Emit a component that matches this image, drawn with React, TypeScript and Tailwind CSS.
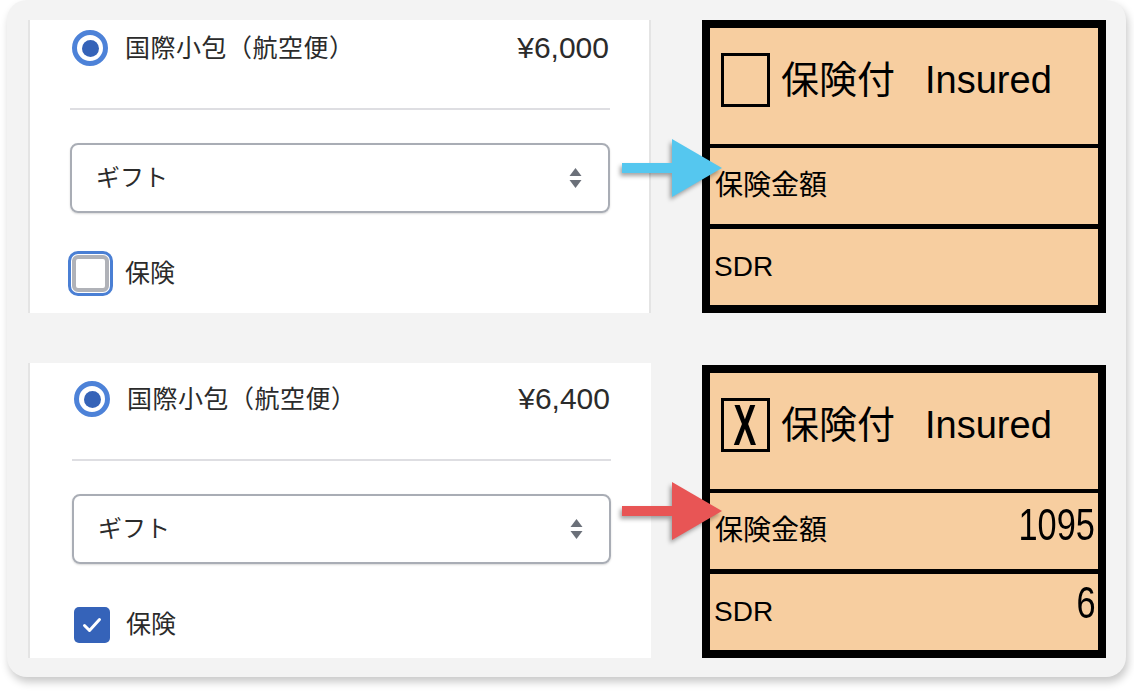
const font = "font-['Liberation_Sans','Noto_Sans_CJK_JP',sans-serif]";

function Chevrons() {
  return (
    <svg width="13" height="21" viewBox="0 0 13 21" className="fill-[#6b7079]">
      <path d="M6.5 0 L12.5 8 H0.5 Z" />
      <path d="M0.5 12 H12.5 L6.5 20 Z" />
    </svg>
  );
}

function Arrow({ color }: { color: string }) {
  return (
    <svg
      width="112"
      height="66"
      viewBox="0 0 112 66"
      className="absolute left-[587px] top-[115px] drop-shadow-[-2px_3px_2px_rgba(0,0,0,0.35)]"
    >
      <rect x="7" y="28" width="52" height="10" fill={color} />
      <polygon points="57,4 107,33 57,62" fill={color} />
    </svg>
  );
}

function ShippingPanel({ price, checked, shifted }: { price: string; checked: boolean; shifted: boolean }) {
  return (
    <div
      className={
        shifted
          ? 'w-[623px] bg-white border-l-2 border-[#e4e4e4] pl-[42px] pr-[40px] pt-[18px] text-[#2b2b2b]'
          : 'w-[623px] bg-white border-l-2 border-r-2 border-[#e4e4e4] pl-[40px] pr-[39px] pt-[10px] text-[#2b2b2b]'
      }
    >
      <div className="h-[36px] flex items-center pl-[2px] pr-[1px]">
        <div className="w-[36px] h-[36px] rounded-full border-[5px] border-[#4d82d8] flex items-center justify-center bg-white">
          <div className="w-[17px] h-[17px] rounded-full bg-[#3563b8]" />
        </div>
        <span className="ml-[17px] text-[25px] tracking-[0.5px] leading-none">国際小包（航空便）</span>
        <span className="ml-auto text-[30px] leading-none">{price}</span>
      </div>

      <div className="mt-[42px] h-[2px] bg-[#dedee2]" />

      <div className="mt-[33px] h-[70px] rounded-[8px] border-2 border-[#a9adb5] shadow-[0_1px_2px_rgba(0,0,0,0.15)] flex items-center pl-[24px] pr-[26px]">
        <span className="text-[24px] leading-none">ギフト</span>
        <span className="ml-auto">
          <Chevrons />
        </span>
      </div>

      <div className="mt-[42px] h-[37px] flex items-center pl-[2px]">
        {checked ? (
          <div className="w-[36px] h-[36px] rounded-[5px] bg-[#3563b9] flex items-center justify-center">
            <svg width="20" height="20" viewBox="0 0 20 20" fill="none" stroke="white" strokeWidth="3" strokeLinecap="round" strokeLinejoin="round">
              <path d="M2.5 10.5 L7.5 15.5 L17.5 4.5" />
            </svg>
          </div>
        ) : (
          <div className="w-[37px] h-[37px] rounded-[6px] border-[4px] border-[#b0b2b8] bg-white outline-3 outline-[#4a7fd4] outline-offset-1" />
        )}
        <span className="ml-[16px] text-[25px] leading-none">保険</span>
      </div>
    </div>
  );
}

function InsuranceForm({ checked, amount, sdr }: { checked: boolean; amount?: string; sdr?: string }) {
  return (
    <div className="w-[404px] h-[293px] border-[8px] border-black bg-[#f7cea0] text-black flex flex-col">
      <div className="h-[116px] shrink-0 flex items-center pl-[11px] pb-[12px]">
        <div className="w-[49px] h-[54px] border-[3px] border-black flex items-center justify-center">
          {checked && (
            <span className="inline-block text-[57px] leading-[46px] font-bold scale-x-[0.6] font-['Liberation_Sans',sans-serif]">X</span>
          )}
        </div>
        <span className="ml-[11px] text-[38px] leading-none">保険付</span>
        <span className="ml-[30px] text-[38px] leading-none">Insured</span>
      </div>
      <div className="h-[80px] shrink-0 border-t-[4px] border-black flex justify-between pl-[5px] pr-[3px]">
        <span className="self-center text-[28px] leading-none">保険金額</span>
        {amount && (
          <span className="mt-[10px] self-start inline-block origin-right scale-x-[0.78] text-[44px] leading-none">{amount}</span>
        )}
      </div>
      <div className="flex-1 border-t-[5px] border-black flex justify-between pl-[4px] pr-[3px]">
        <span className="self-center text-[28px] leading-none">SDR</span>
        {sdr && (
          <span className="mt-[7px] self-start inline-block origin-right scale-x-[0.78] text-[44px] leading-none">{sdr}</span>
        )}
      </div>
    </div>
  );
}

export default function App() {
  return (
    <div className={`w-[1134px] h-[694px] bg-white pl-[7px] ${font}`}>
      <div className="w-[1119px] h-[677px] rounded-[20px] bg-[#f3f3f3] shadow-[2px_5px_8px_rgba(0,0,0,0.22)] pl-[21px] pr-[20px] pt-[20px] flex flex-col gap-[50px]">
        <div className="relative h-[293px] flex gap-[51px]">
          <ShippingPanel price="¥6,000" checked={false} shifted={false} />
          <InsuranceForm checked={false} />
          <Arrow color="#55c7ef" />
        </div>
        <div className="relative h-[295px] flex gap-[51px]">
          <ShippingPanel price="¥6,400" checked={true} shifted={true} />
          <div className="pt-[2px]">
            <InsuranceForm checked={true} amount="1095" sdr="6" />
          </div>
          <Arrow color="#e85555" />
        </div>
      </div>
    </div>
  );
}
